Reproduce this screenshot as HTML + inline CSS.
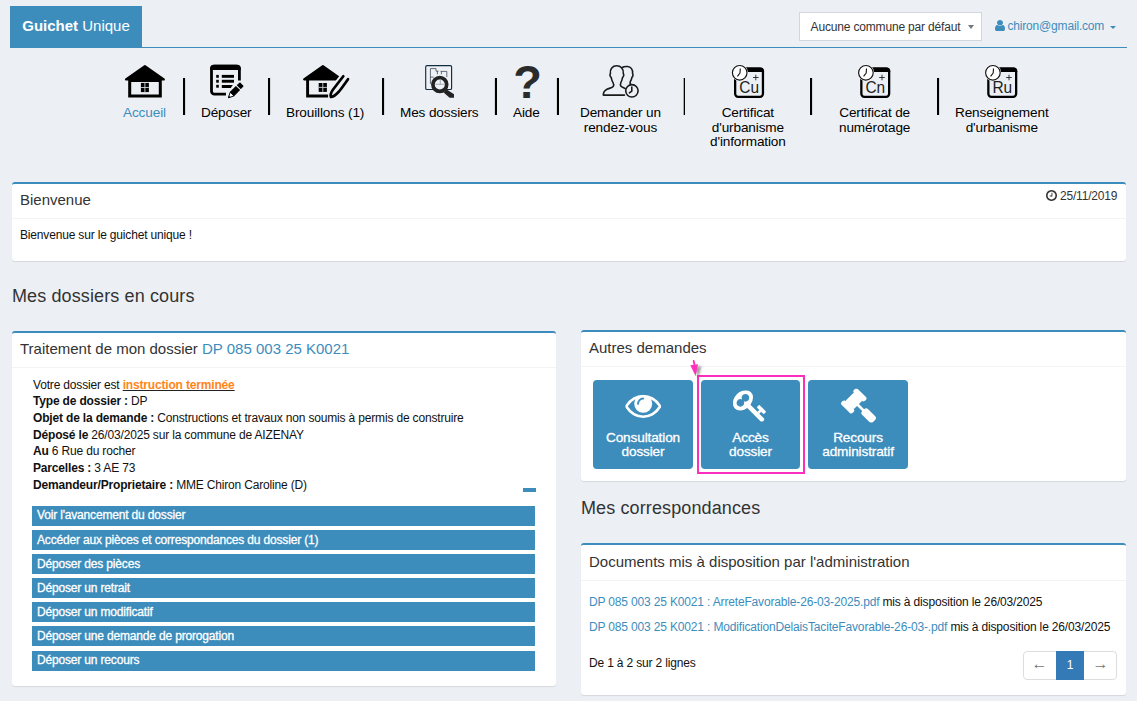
<!DOCTYPE html>
<html lang="fr"><head><meta charset="utf-8"><title>Guichet Unique</title>
<style>
*{box-sizing:border-box}
html,body{margin:0;padding:0}
body{width:1137px;height:701px;overflow:hidden;background:#ecf0f5;font-family:"Liberation Sans",Arial,sans-serif;font-size:12px;color:#111;position:relative}
a{color:#3c8dbc;text-decoration:none}
.abs{position:absolute}
#brand{left:10px;top:6px;width:132px;height:41px;background:#3c8dbc;color:#fff;font-size:15px;line-height:39px;text-align:center}
#hline{left:10px;top:47px;width:1117px;height:1px;background:#3c8dbc}
#sel{left:799px;top:12px;width:183px;height:29px;background:#fff;border:1px solid #d2d6de;font-size:12px;line-height:28px;padding-left:10.600px;color:#333;letter-spacing:-0.170px;white-space:nowrap}
#sel i{position:absolute;left:168px;top:12px;border:3px solid transparent;border-top:4px solid #777;border-bottom:none;width:0;height:0}
#user{left:1007.500px;top:18px;font-size:12px;color:#3c8dbc;white-space:nowrap;line-height:16px;letter-spacing:-0.180px}
#user i{position:absolute;left:102px;top:8px;border:3px solid transparent;border-top:3.500px solid #3c8dbc;border-bottom:none;width:0;height:0}
.nav{top:106.300px;font-size:13.600px;letter-spacing:-0.130px;line-height:14.300px;text-align:center;white-space:nowrap;color:#000}
.box{background:#fff;border-top:2px solid #3c8dbc;border-radius:3px;box-shadow:0 1px 1px rgba(0,0,0,.1)}
.bh{font-size:15px;line-height:18px;color:#333;padding:0 8px;white-space:nowrap}
.hr{height:1px;background:#f4f4f4;position:absolute;left:0;right:0}
h2{margin:0;font-weight:normal;font-size:18px;line-height:22px;color:#333;position:absolute;white-space:nowrap;letter-spacing:0.120px}
.ln{position:absolute;white-space:nowrap;font-size:12px;line-height:14px;color:#111;letter-spacing:-0.170px}
.ln b{color:#111}
.bar{position:absolute;left:20px;width:503px;height:20px;background:#3c8dbc;color:#fff;font-size:12px;line-height:19px;padding-left:5px;white-space:nowrap;letter-spacing:-0.170px;-webkit-text-stroke:0.300px #fff}
.tile{position:absolute;top:48px;width:100px;height:89px;background:#3c8dbc;border-radius:4px;color:#fff;text-align:center;font-size:13.600px;letter-spacing:-0.130px;line-height:14.500px;-webkit-text-stroke:0.300px #fff}
.tile span{position:absolute;left:0;right:0;top:50.600px}
.pg{position:absolute;top:106px;height:29px;text-align:center;font-size:12px}
</style></head><body>
<div id="brand" class="abs"><b>Guichet</b> Unique</div>
<div id="hline" class="abs"></div>
<div id="sel" class="abs">Aucune commune par défaut<i></i></div>
<svg class="abs" style="left:995px;top:20px" width="10" height="11" viewBox="0 128 1280 1536" preserveAspectRatio="none"><path fill="#3c8dbc" d="M1280 1399q0 109-62.500 187t-150.500 78h-854q-88 0-150.500-78t-62.500-187q0-85 8.500-160.500t31.500-152 58.500-131 94-89 134.500-34.500q131 128 313 128t313-128q76 0 134.500 34.500t94 89 58.500 131 31.500 152 8.500 160.500zm-256-887q0 159-112.500 271.500t-271.500 112.500-271.500-112.500-112.500-271.500 112.500-271.500 271.500-112.500 271.500 112.500 112.500 271.500z"/></svg>
<div id="user" class="abs">chiron@gmail.com<i></i></div>
<svg class="abs" style="left:0;top:0" width="1137" height="170" viewBox="0 0 1137 170" font-family="Liberation Sans, Arial, sans-serif">
<!-- separators -->
<g fill="#000">
<rect x="183" y="78" width="2.100" height="37"/>
<rect x="268" y="78" width="2.100" height="37"/>
<rect x="382" y="78" width="2.100" height="37"/>
<rect x="494.900" y="78" width="2.100" height="37"/>
<rect x="556.900" y="78" width="2.100" height="37"/>
<rect x="683.700" y="78" width="1.300" height="37"/>
<rect x="810" y="78" width="2.100" height="37"/>
<rect x="937" y="78" width="2.100" height="37"/>
</g>
<!-- accueil house -->
<g>
<polygon points="144.900,66.200 163.800,79.500 126,79.500" fill="#000" stroke="#000" stroke-width="2.200" stroke-linejoin="round"/>
<rect x="129.700" y="80.500" width="30.600" height="15.500" fill="none" stroke="#000" stroke-width="3"/>
<rect x="140.900" y="82.900" width="8" height="9.200" fill="#000"/>
<path d="M144.900,82.900 v9.200 M140.900,87.500 h8" stroke="#cfd3d8" stroke-width="0.9"/>
</g>
<!-- deposer -->
<g>
<path d="M226,94.200 H214.500 a3,3 0 0 1 -3,-3 V69.200 a3,3 0 0 1 3,-3 H236.400 a3,3 0 0 1 3,3 V80.600" fill="none" stroke="#000" stroke-width="2.800"/>
<path d="M210.100,70 V68.300 a3.500,3.500 0 0 1 3.500,-3.500 h23.700 a3.500,3.500 0 0 1 3.500,3.500 V70 z" fill="#000"/>
<g fill="#000">
<rect x="216.200" y="74.900" width="2.600" height="2.900"/><rect x="221.800" y="74.900" width="12.200" height="2.900"/>
<rect x="216.200" y="79.800" width="2.600" height="2.900"/><rect x="221.800" y="79.800" width="12.200" height="2.900"/>
<rect x="216.200" y="84.800" width="2.600" height="2.900"/><polygon points="221.800,85 232.800,85 230.800,87.900 221.800,87.900"/>
</g>
<g transform="translate(228.200,98) rotate(-45.500)">
<polygon points="0.300,0 5.600,-2.700 5.600,2.700" fill="#fff" stroke="#000" stroke-width="0.900" stroke-linejoin="round"/>
<polygon points="0,0 2.100,-1.300 2.100,1.300" fill="#000"/>
<rect x="5.300" y="-3" width="8.700" height="6" fill="#000"/>
<rect x="15.100" y="-2.800" width="4.300" height="5.600" rx="0.600" fill="#000"/>
</g>
</g>
<!-- brouillons -->
<g>
<polygon points="322.900,66.200 341.700,79.300 304.100,79.300" fill="#000" stroke="#000" stroke-width="2.200" stroke-linejoin="round"/>
<rect x="318.700" y="83" width="8.200" height="8.900" fill="#000"/>
<path d="M322.800,83 v8.900 M318.700,87.400 h8.200" stroke="#cfd3d8" stroke-width="0.900"/>
<path d="M343.300,76.200 L332.900,89.800 C331.400,92 330.200,95.200 330.900,96.900 C333.500,96.900 336.500,94.200 339,91.500 C341.500,88.500 345,83.500 348,79.200 z" fill="#ecf0f5" stroke="#ecf0f5" stroke-width="6.600" stroke-linejoin="round"/>
<path d="M307.600,80 V96.050 H328.100" fill="none" stroke="#000" stroke-width="2.900"/>
<path d="M343.300,76.200 L332.900,89.800 C331.400,92 330.200,95.200 330.900,96.900 C333.500,96.900 336.500,94.200 339,91.500 C341.500,88.500 345,83.500 348,79.200" fill="none" stroke="#000" stroke-width="2.700" stroke-linecap="round" stroke-linejoin="miter" stroke-miterlimit="3"/>
</g>
<!-- mes dossiers -->
<g>
<rect x="425.700" y="65.600" width="25.900" height="23.900" rx="1.300" fill="#eef1f6" stroke="#0f2d40" stroke-width="1.150"/>
<path d="M430.400,84 V68.600 H436 V71.200 H438.600 M437.400,71.200 V74.300 M441.400,71.400 V74.300 M440.500,71.400 H446.800 V77.100 M430.400,77.100 H433.700" fill="none" stroke="#39434b" stroke-width="0.750"/>
<circle cx="439.800" cy="84.500" r="6.900" fill="#eef1f5" stroke="#222" stroke-width="3.700"/>
<path d="M435.400,84.300 H444.500 M440.300,78.900 V84.300" fill="none" stroke="#8d969d" stroke-width="0.750"/>
<polygon points="446.800,89.400 454,94.300 454,97.700 449.600,97.700 443.600,92.400" fill="#222"/>
</g>
<!-- aide -->
<text x="527.500" y="97.800" text-anchor="middle" font-size="46.900" font-weight="bold" fill="#2b2b2b">?</text>
<!-- rendez-vous -->
<g fill="none" stroke="#1a1a1a" stroke-width="1.600" stroke-linecap="round" stroke-linejoin="round">
<path d="M624.500,95.100 H603.300 C603.300,92.500 604.500,90.500 607,89.300 C609.500,88.200 612.500,87.600 613.300,86.300 C614.100,85 613.800,84 613,82.600 C611.800,80.700 611.400,79 611.300,77.500 C610,77 609.600,74.500 610.400,73.500 C609.800,69 612.500,65.800 616.700,65.800 C620.900,65.800 623.800,69 623.300,73.500 C624.100,74.500 623.700,77 622.500,77.500 C622.300,79 621.800,80.800 620.900,82.500 C620.200,84 620.200,85.200 621,86.300 C621.800,87.300 623.500,87.700 625.300,88.600"/>
<path d="M622.300,67.500 C623.500,66.700 625.500,66.300 627.500,66.500 C631,66.800 633,69.600 632.600,73.500 C633.300,74.500 633,76.800 631.900,77.300 C631.700,78.800 631.100,80.300 630.300,81.600 C629.800,82.600 630,83.600 630.700,84.400"/>
<circle cx="631.900" cy="90.850" r="6.200"/>
<path d="M631.800,87.100 V91.200 L629.400,92.900"/>
</g>
<g transform="translate(0,0)">
<rect x="735.15" y="68.6" width="27.8" height="28.2" rx="3" fill="none" stroke="#000" stroke-width="2.3"/>
<path d="M734,72.1 V71 a3.5,3.5 0 0 1 3.500,-3.500 h23.100 a3.500,3.500 0 0 1 3.500,3.500 v1.100 z" fill="#000"/>
<circle cx="739.7" cy="72.8" r="8.400" fill="#f3f5f8"/>
<circle cx="739.7" cy="72.800" r="7.300" fill="#fff" stroke="#111" stroke-width="1.150"/>
<path d="M740.300,68.500 L740,73 L737.400,76.400" fill="none" stroke="#111" stroke-width="1.100" stroke-linejoin="round"/>
<path d="M753,77.500 h5.600 M755.800,74.700 v5.600" stroke="#222" stroke-width="0.9" fill="none"/>
<text transform="translate(749.1,92.5) scale(0.950,1)" text-anchor="middle" font-size="16.300" fill="#222">Cu</text>
</g>
<g transform="translate(126.2,0)">
<rect x="735.15" y="68.6" width="27.8" height="28.2" rx="3" fill="none" stroke="#000" stroke-width="2.3"/>
<path d="M734,72.1 V71 a3.5,3.5 0 0 1 3.500,-3.500 h23.100 a3.500,3.500 0 0 1 3.500,3.500 v1.100 z" fill="#000"/>
<circle cx="739.7" cy="72.8" r="8.400" fill="#f3f5f8"/>
<circle cx="739.7" cy="72.800" r="7.300" fill="#fff" stroke="#111" stroke-width="1.150"/>
<path d="M740.300,68.500 L740,73 L737.400,76.400" fill="none" stroke="#111" stroke-width="1.100" stroke-linejoin="round"/>
<path d="M753,77.500 h5.600 M755.800,74.700 v5.600" stroke="#222" stroke-width="0.9" fill="none"/>
<text transform="translate(749.1,92.5) scale(0.950,1)" text-anchor="middle" font-size="16.300" fill="#222">Cn</text>
</g>
<g transform="translate(253.2,0)">
<rect x="735.15" y="68.6" width="27.8" height="28.2" rx="3" fill="none" stroke="#000" stroke-width="2.3"/>
<path d="M734,72.1 V71 a3.5,3.5 0 0 1 3.500,-3.500 h23.100 a3.500,3.500 0 0 1 3.500,3.500 v1.100 z" fill="#000"/>
<circle cx="739.7" cy="72.8" r="8.400" fill="#f3f5f8"/>
<circle cx="739.7" cy="72.800" r="7.300" fill="#fff" stroke="#111" stroke-width="1.150"/>
<path d="M740.300,68.500 L740,73 L737.400,76.400" fill="none" stroke="#111" stroke-width="1.100" stroke-linejoin="round"/>
<path d="M753,77.500 h5.600 M755.800,74.700 v5.600" stroke="#222" stroke-width="0.9" fill="none"/>
<text transform="translate(749.1,92.5) scale(0.950,1)" text-anchor="middle" font-size="16.300" fill="#222">Ru</text>
</g>
</svg>
<div class="nav abs" style="left:123px;color:#3c8dbc">Accueil</div>
<div class="nav abs" style="left:201px">Déposer</div>
<div class="nav abs" style="left:286px">Brouillons (1)</div>
<div class="nav abs" style="left:400px">Mes dossiers</div>
<div class="nav abs" style="left:513px">Aide</div>
<div class="nav abs" style="left:580px">Demander un<br>rendez-vous</div>
<div class="nav abs" style="left:710px">Certificat<br>d'urbanisme<br>d'information</div>
<div class="nav abs" style="left:839px">Certificat de<br>numérotage</div>
<div class="nav abs" style="left:955px">Renseignement<br>d'urbanisme</div>

<div class="box abs" style="left:12px;top:182px;width:1114px;height:79px">
  <div class="bh abs" style="left:0;top:7px">Bienvenue</div>
  <svg class="abs" style="left:1034px;top:6px" width="11" height="11" viewBox="0 128 1536 1536"><path fill="#333" d="M896 544v448q0 14-9 23t-23 9h-320q-14 0-23-9t-9-23v-64q0-14 9-23t23-9h224v-352q0-14 9-23t23-9h64q14 0 23 9t9 23zm416 352q0-148-73-273t-198-198-273-73-273 73-198 198-73 273 73 273 198 198 273 73 273-73 198-198 73-273zm224 0q0 209-103 385.500t-279.500 279.500-385.500 103-385.500-103-279.500-279.500-103-385.500 103-385.500 279.500-279.500 385.500-103 385.500 103 279.500 279.500 103 385.500z"/></svg>
  <div class="abs" id="date" style="left:1048px;top:5px;font-size:12px;line-height:14px;color:#333;letter-spacing:-0.200px;white-space:nowrap">25/11/2019</div>
  <div class="hr" style="top:34px"></div>
  <div class="ln" style="left:8px;top:44px">Bienvenue sur le guichet unique !</div>
</div>

<h2 style="left:12px;top:285px">Mes dossiers en cours</h2>

<div class="box abs" style="left:12px;top:331px;width:544px;height:355px">
  <div class="bh abs" style="left:0;top:7px">Traitement de mon dossier <a>DP 085 003 25 K0021</a></div>
  <div class="hr" style="top:34px"></div>
  <div class="ln" style="left:21px;top:45px">Votre dossier est <u style="text-decoration-color:#222"><b style="color:#ff851b">instruction terminée</b></u></div>
  <div class="ln" style="left:21px;top:61px"><b>Type de dossier :</b> DP</div>
  <div class="ln" style="left:21px;top:78px"><b>Objet de la demande :</b> Constructions et travaux non soumis à permis de construire</div>
  <div class="ln" style="left:21px;top:95px"><b>Déposé le</b> 26/03/2025 sur la commune de AIZENAY</div>
  <div class="ln" style="left:21px;top:111px"><b>Au</b> 6 Rue du rocher</div>
  <div class="ln" style="left:21px;top:128px"><b>Parcelles :</b> 3 AE 73</div>
  <div class="ln" style="left:21px;top:145px"><b>Demandeur/Proprietaire :</b> MME Chiron Caroline (D)</div>
  <div class="abs" style="left:511px;top:155px;width:13px;height:4px;background:#3c8dbc"></div>
  <div class="bar" style="top:173px">Voir l'avancement du dossier</div>
  <div class="bar" style="top:197px;line-height:21px">Accéder aux pièces et correspondances du dossier (1)</div>
  <div class="bar" style="top:221px;line-height:21px">Déposer des pièces</div>
  <div class="bar" style="top:245px;line-height:21px">Déposer un retrait</div>
  <div class="bar" style="top:269px;line-height:21px">Déposer un modificatif</div>
  <div class="bar" style="top:293px;line-height:21px">Déposer une demande de prorogation</div>
  <div class="bar" style="top:318px">Déposer un recours</div>
</div>

<div class="box abs" style="left:581px;top:330px;width:545px;height:151px">
  <div class="bh abs" style="left:0;top:7px">Autres demandes</div>
  <div class="hr" style="top:34px"></div>
  <div class="tile" style="left:12px"><span>Consultation<br>dossier</span></div>
  <div class="tile" style="left:120px;width:99px"><span>Accès<br>dossier</span></div>
  <div class="tile" style="left:227px"><span>Recours<br>administratif</span></div>
  <div class="abs" style="left:116px;top:43px;width:108px;height:99px;border:2px solid #fb2fbd"></div>
  <svg class="abs" style="left:0;top:-2px" width="545" height="151" viewBox="581 330 545 151">
<svg x="625.2" y="394.7" width="36" height="23.3" viewBox="0 384 1792 1152" preserveAspectRatio="none"><path fill="#fff" d="M1664 960q-152-236-381-353 61 104 61 225 0 185-131.5 316.5t-316.5 131.5-316.5-131.5-131.5-316.5q0-121 61-225-229 117-381 353 133 205 333.5 326.5t434.5 121.5 434.5-121.5 333.5-326.5zm-720-384q0-20-14-34t-34-14q-125 0-214.5 89.5t-89.5 214.5q0 20 14 34t34 14 34-14 14-34q0-86 61-147t147-61q20 0 34-14t14-34zm848 384q0 34-20 69-140 230-376.5 368.5t-499.5 138.5-499.5-139-376.5-368q-20-35-20-69t20-69q140-229 376.5-368t499.5-139 499.5 139 376.5 368q20 35 20 69z"/></svg>
<svg x="732.8" y="390.2" width="33.2" height="31.6" viewBox="0 128 1683 1592" preserveAspectRatio="none"><path fill="#fff" d="M832 512q0-80-56-136t-136-56-136 56-56 136q0 42 19 83-41-19-83-19-80 0-136 56t-56 136 56 136 136 56 136-56 56-136q0-42-19-83 41 19 83 19 80 0 136-56t56-136zm851 704q0 17-49 66t-66 49q-9 0-28.5-16t-36.5-33-38.5-40-24.5-26l-96 96 220 220q28 28 28 68 0 42-39 81t-81 39q-40 0-68-28l-671-671q-176 131-365 131-163 0-265.5-102.5t-102.5-265.5q0-160 95-313t248-248 313-95q163 0 265.5 102.5t102.5 265.5q0 189-131 365l355 355 96-96q-3-3-26-24.5t-40-38.5-33-36.5-16-28.5q0-17 49-66t66-49q13 0 23 10 6 6 46 44.5t82 79.5 86.5 86 73 78 28.5 41z"/></svg>
<svg x="841" y="388.4" width="35" height="34.3" viewBox="40 40 1731 1731" preserveAspectRatio="none"><path fill="#fff" d="M1771 1536q0 53-37 90l-107 108q-39 37-91 37-53 0-90-37l-363-364q-38-36-38-90 0-53 43-96l-256-256-126 126q-14 14-34 14t-34-14q2 2 12.5 12t12.5 13 10 11.5 10 13.5 6 13.5 5.5 16.5 1.5 18q0 38-28 68-3 3-16.5 18t-19 20.5-18.5 16.5-22 15.500-22 9-26 4.500q-40 0-68-28l-408-408q-28-28-28-68 0-13 4.500-26t9-22 15.500-22 16.500-18.500 20.500-19 18-16.500q30-28 68-28 10 0 18 1.500t16.500 5.500 13.500 6 13.500 10 11.500 10 13 12.500 12 12.500q-14-14-14-34t14-34l348-348q14-14 34-14t34 14q-2-2-12.500-12t-12.500-13-10-11.500-10-13.500-6-13.500-5.500-16.500-1.500-18q0-38 28-68 3-3 16.500-18t19-20.500 18.500-16.500 22-15.500 22-9 26-4.500q40 0 68 28l408 408q28 28 28 68 0 13-4.500 26t-9 22-15.500 22-16.500 18.500-20.500 19-18 16.500q-30 28-68 28-10 0-18-1.500t-16.500-5.500-13.500-6-13.500-10-11.500-10-13-12.500-12-12.500q14 14 14 34t-14 34l-126 126 256 256q43-43 96-43 52 0 91 37l363 363q37 39 37 91z"/></svg>
<defs><filter id="bl" x="-50%" y="-50%" width="200%" height="200%"><feGaussianBlur stdDeviation="1.1"/></filter></defs>
<polygon points="693.800,367 701.500,366 698.500,377.500" fill="#555" opacity="0.550" filter="url(#bl)"/>
<polygon points="690.300,365.300 698,364.200 695.600,376" fill="#ff30bb"/>
<path d="M693.700,360.900 L694.700,366" stroke="#ff30bb" stroke-width="1.900" stroke-linecap="round"/>
</svg>
</div>

<h2 style="left:581px;top:497px">Mes correspondances</h2>

<div class="box abs" style="left:581px;top:543px;width:545px;height:152px">
  <div class="bh abs" style="left:0;top:8px">Documents mis à disposition par l'administration</div>
  <div class="hr" style="top:35px"></div>
  <div class="ln" style="left:8px;top:50px;letter-spacing:-0.160px"><a>DP 085 003 25 K0021 : ArreteFavorable-26-03-2025.pdf</a> mis à disposition le 26/03/2025</div>
  <div class="ln" style="left:8px;top:75px;letter-spacing:-0.158px"><a>DP 085 003 25 K0021 : ModificationDelaisTaciteFavorable-26-03-.pdf</a> mis à disposition le 26/03/2025</div>
  <div class="ln" style="left:8px;top:111px">De 1 à 2 sur 2 lignes</div>
  <div class="abs" style="left:442px;top:106px;width:94px;height:29px;border:1px solid #ddd;border-radius:4px;background:#fff"></div>
  <div class="pg" style="left:475px;width:28px;background:#337ab7;color:#fff;line-height:29px">1</div>
  <div class="pg" style="left:442px;width:33px;color:#777;line-height:26px;font-size:16px">←</div>
  <div class="pg" style="left:503px;width:33px;color:#777;line-height:26px;font-size:16px">→</div>
</div>
</body></html>
